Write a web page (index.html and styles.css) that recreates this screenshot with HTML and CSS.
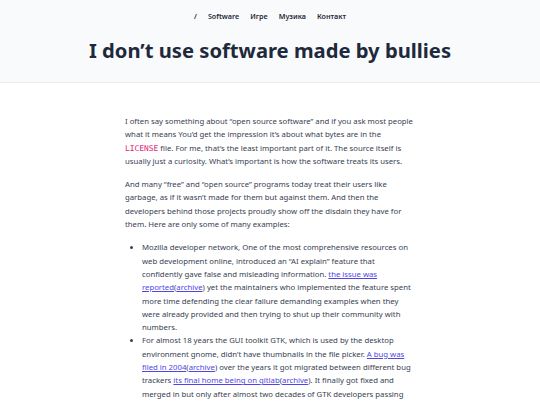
FILE: index.html
```html
<!DOCTYPE html>
<html lang="en">
<head>
<meta charset="utf-8">
<title>I don’t use software made by bullies</title>
<link rel="stylesheet" href="styles.css">
</head>
<body>
<header class="site-header">
  <nav class="nav">
    <a href="#">/</a>
    <a href="#">Software</a>
    <a href="#">Игре</a>
    <a href="#">Музика</a>
    <a href="#">Контакт</a>
  </nav>
  <h1 class="title">I don’t use software made by bullies</h1>
</header>
<main class="content">
  <p>I often say something about “open source software” and if you ask most people what it means You’d get the impression it’s about what bytes are in the <code>LICENSE</code> file. For me, that’s the least important part of it. The source itself is usually just a curiosity. What’s important is how the software treats its users.</p>
  <p>And many “free” and “open source” programs today treat their users like garbage, as if it wasn’t made for them but against them. And then the developers behind those projects proudly show off the disdain they have for them. Here are only some of many examples:</p>
  <ul>
    <li>Mozilla developer network, One of the most comprehensive resources on web development online, introduced an “AI explain” feature that confidently gave false and misleading information. <a href="#">the issue was reported</a>(<a href="#">archive</a>) yet the maintainers who implemented the feature spent more time defending the clear failure demanding examples when they were already provided and then trying to shut up their community with numbers.</li>
    <li>For almost 18 years the GUI toolkit GTK, which is used by the desktop environment gnome, didn’t have thumbnails in the file picker. <a href="#">A bug was filed in 2004</a>(<a href="#">archive</a>) over the years it got migrated between different bug trackers <a href="#">its final home being on gitlab</a>(<a href="#">archive</a>). It finally got fixed and merged in but only after almost two decades of GTK developers passing the buck, calling everyone entitled for wanting this basic feature and even</li>
  </ul>
</main>
</body>
</html>
```
FILE: styles.css
```css
html, body {
  margin: 0;
  padding: 0;
  background: #ffffff;
}
body {
  font-family: "Noto Sans", sans-serif;
  color: #374151;
}
.site-header {
  background: #f8fafc;
  border-bottom: 1px solid #e9ecf0;
  padding: 10px 0 19px;
}
.nav {
  display: flex;
  justify-content: center;
  gap: 11px;
  font-size: 7.2px;
  font-weight: 600;
  line-height: 12px;
}
.nav a {
  color: #1f2937;
  text-decoration: none;
}
.title {
  margin: 15px 0 0;
  text-align: center;
  font-size: 20.2px;
  line-height: 26px;
  font-weight: 700;
  color: #1e293b;
}
.content {
  width: 290px;
  margin: 0 auto;
  padding-top: 32px;
  font-size: 7.75px;
  line-height: 13.3px;
}
.content p {
  margin: 0 0 10px;
}
.content ul {
  margin: 0;
  padding-left: 17px;
}
code {
  font-family: "DejaVu Sans Mono", monospace;
  color: #db2777;
  font-size: 7.9px;
}
.content a {
  color: #4f46e5;
}
```
